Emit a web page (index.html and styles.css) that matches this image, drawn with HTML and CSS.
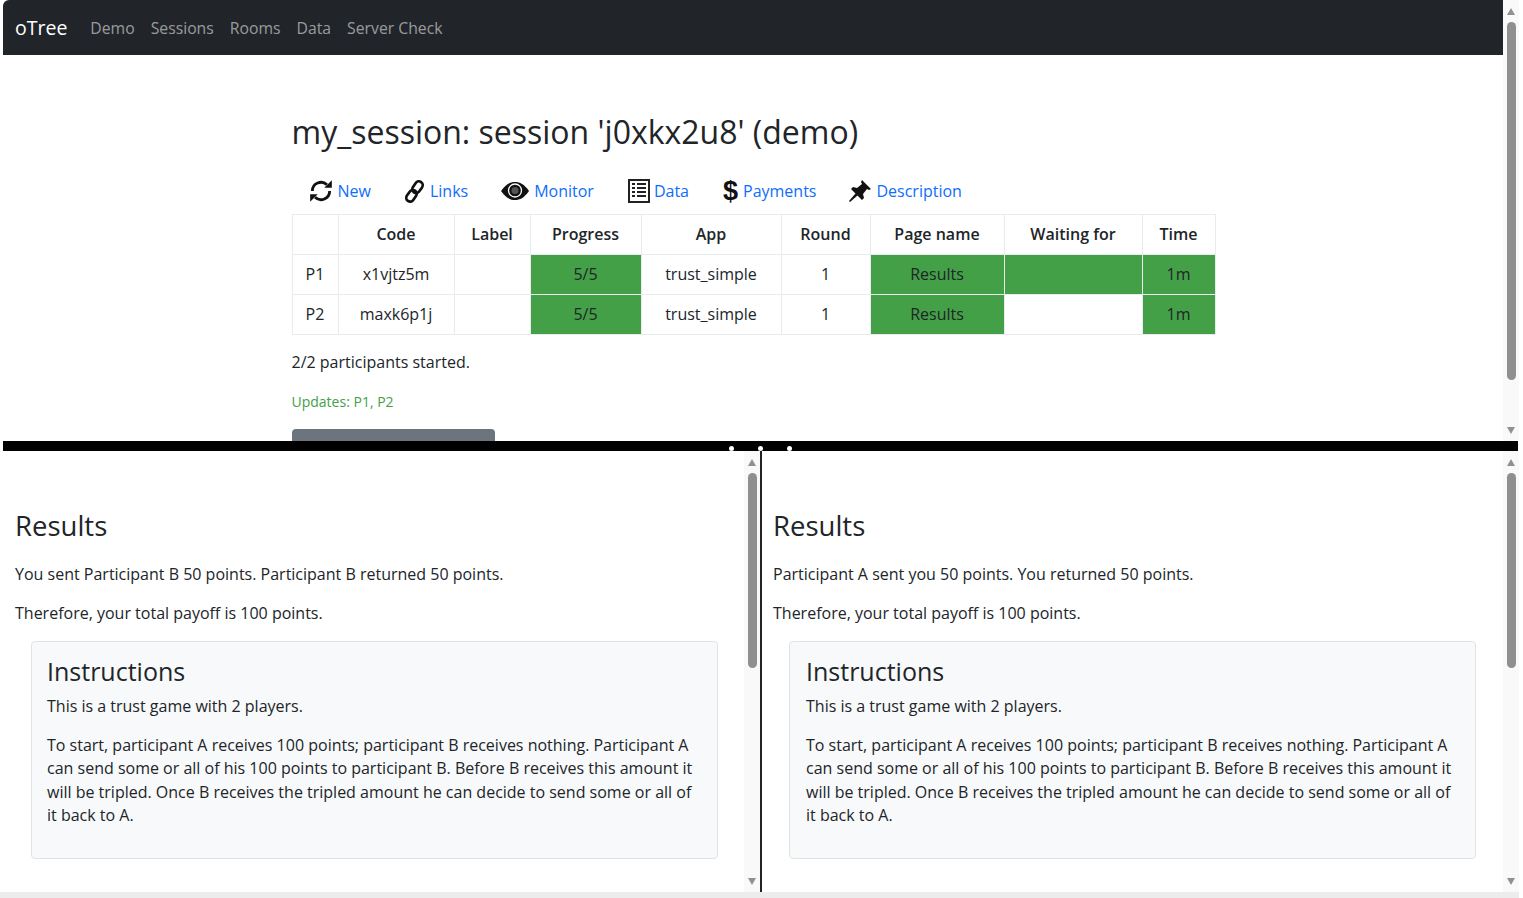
FILE: index.html
```html
<!DOCTYPE html>
<html lang="en">
  <head>
    <meta charset="UTF-8" />
    <title>oTree demo</title>
    <link rel="stylesheet" href="styles.css">
  </head>
  <body>
    <div class="top-pane">
      <div class="pane-body">
        <nav class="navbar">
          <span class="brand">oTree</span>
          <a class="nav-link">Demo</a>
          <a class="nav-link">Sessions</a>
          <a class="nav-link">Rooms</a>
          <a class="nav-link">Data</a>
          <a class="nav-link">Server Check</a>
        </nav>
        <div class="container">
          <h1 class="session-title">my_session: session 'j0xkx2u8' (demo)</h1>
          <ul class="tabs">
            <li class="tab tab-new">
              <svg class="icon" viewBox="0 0 24 24" width="26" height="26"><path d="M4 12a8 8 0 0 1 13.500-5.800" fill="none" stroke="#111" stroke-width="2.600"/><path d="M20 12a8 8 0 0 1-13.500 5.800" fill="none" stroke="#111" stroke-width="2.600"/><path d="M22 2v7h-7zM2 22v-7h7z" fill="#111"/></svg>
              <a>New</a>
            </li>
            <li class="tab">
              <svg class="icon" viewBox="0 0 24 24" width="23" height="25"><g fill="none" stroke="#111" stroke-width="2.800" transform="rotate(-55 12 12)"><rect x="0" y="8" width="13" height="8" rx="4"/><rect x="11" y="8" width="13" height="8" rx="4"/></g></svg>
              <a>Links</a>
            </li>
            <li class="tab tab-monitor">
              <svg class="icon" viewBox="0 0 30 20" width="30" height="20"><path d="M1 10C6 3 10 1 15 1s9 2 14 9c-5 7-9 9-14 9s-9-2-14-9z" fill="#111"/><circle cx="15" cy="9.500" r="6.500" fill="none" stroke="#fff" stroke-width="1.300"/><circle cx="15" cy="9.500" r="3.500" fill="#555"/></svg>
              <a>Monitor</a>
            </li>
            <li class="tab">
              <svg class="icon" viewBox="0 0 22 24" width="22" height="24"><rect x="1" y="1" width="20" height="22" fill="#fff" stroke="#222" stroke-width="2"/><path d="M4 5h3M9 5h9M4 9h3M9 9h9M4 13h3M9 13h9M4 17h3M9 17h9" stroke="#222" stroke-width="2"/></svg>
              <a>Data</a>
            </li>
            <li class="tab tab-payments">
              <span class="dollar">$</span>
              <a>Payments</a>
            </li>
            <li class="tab">
              <svg class="icon" viewBox="0 0 24 24" width="24" height="24"><path d="M14 1l9 9-2 1-2-1-4 5 1 4-2 2-4.500-4.500L2 23l-1-1 6.500-7.500L3 10l2-2 4 1 5-4-1-2z" fill="#111"/></svg>
              <a>Description</a>
            </li>
          </ul>
          <table class="monitor">
            <thead>
              <tr><th class="col-id"></th><th class="col-code">Code</th><th class="col-label">Label</th><th class="col-progress">Progress</th><th class="col-app">App</th><th class="col-round">Round</th><th class="col-page">Page name</th><th class="col-wait">Waiting for</th><th class="col-time">Time</th></tr>
            </thead>
            <tbody>
              <tr><td>P1</td><td>x1vjtz5m</td><td></td><td class="hl">5/5</td><td>trust_simple</td><td>1</td><td class="hl">Results</td><td class="hl"></td><td class="hl">1m</td></tr>
              <tr><td>P2</td><td>maxk6p1j</td><td></td><td class="hl">5/5</td><td>trust_simple</td><td>1</td><td class="hl">Results</td><td></td><td class="hl">1m</td></tr>
            </tbody>
          </table>
          <p class="started">2/2 participants started.</p>
          <p class="updates">Updates: P1, P2</p>
          <button class="advance">Advance slowest users</button>
        </div>
      </div>
      <div class="scrollbar">
        <span class="arrow-up"></span>
        <span class="thumb thumb-top"></span>
        <span class="arrow-down"></span>
      </div>
    </div>

    <div class="divider">
      <span class="dot"></span>
      <span class="dot"></span>
      <span class="dot"></span>
    </div>

    <div class="bottom">
      <div class="frame frame-left">
        <div class="pane-body player">
          <h2 class="page-title">Results</h2>
          <p>You sent Participant B 50 points. Participant B returned 50 points.</p>
          <p>Therefore, your total payoff is 100 points.</p>
          <div class="card">
            <h3>Instructions</h3>
            <p>This is a trust game with 2 players.</p>
            <p>To start, participant A receives 100 points; participant B receives nothing. Participant A can send some or all of his 100 points to participant B. Before B receives this amount it will be tripled. Once B receives the tripled amount he can decide to send some or all of it back to A.</p>
          </div>
        </div>
        <div class="scrollbar">
          <span class="arrow-up"></span>
          <span class="thumb thumb-bottom"></span>
          <span class="arrow-down"></span>
        </div>
      </div>
      <div class="frame frame-right">
        <div class="pane-body player">
          <h2 class="page-title">Results</h2>
          <p>Participant A sent you 50 points. You returned 50 points.</p>
          <p>Therefore, your total payoff is 100 points.</p>
          <div class="card">
            <h3>Instructions</h3>
            <p>This is a trust game with 2 players.</p>
            <p>To start, participant A receives 100 points; participant B receives nothing. Participant A can send some or all of his 100 points to participant B. Before B receives this amount it will be tripled. Once B receives the tripled amount he can decide to send some or all of it back to A.</p>
          </div>
        </div>
        <div class="scrollbar">
          <span class="arrow-up"></span>
          <span class="thumb thumb-bottom"></span>
          <span class="arrow-down"></span>
        </div>
      </div>
    </div>
    <div class="bottom-edge"></div>
  </body>
</html>
```

FILE: styles.css
```css
* {
  margin: 0;
  padding: 0;
  box-sizing: border-box;
}
html,
body {
  height: 100%;
  overflow: hidden;
}
body {
  display: flex;
  flex-direction: column;
  width: 1519px;
  padding-left: 3px;
  background: #fff;
  color: #212529;
  font-family: "Open Sans", "Noto Sans", sans-serif;
  font-size: 16px;
}
.top-pane {
  display: flex;
  height: 441px;
  overflow: hidden;
}
.pane-body {
  flex: 1;
  min-width: 0;
  overflow: hidden;
}
.navbar {
  display: flex;
  align-items: center;
  height: 55px;
  padding-left: 12px;
  background: #212529;
  border-top-left-radius: 6px;
}
.brand {
  margin-right: 15px;
  color: #fff;
  font-size: 19.500px;
}
.nav-link {
  padding: 0 8px;
  color: rgba(255, 255, 255, 0.55);
  font-size: 15.750px;
}
.container {
  width: 923px;
  margin: 0 auto;
}
.session-title {
  margin-top: 57px;
  font-size: 32px;
  font-weight: 400;
  line-height: 40px;
}
.tabs {
  display: flex;
  align-items: center;
  height: 40px;
  margin-top: 19px;
  padding-left: 16px;
  list-style: none;
}
.tab {
  display: flex;
  align-items: center;
  gap: 4px;
  margin-right: 33px;
}
.tab-new {
  margin-right: 32px;
}
.tab-monitor {
  margin-left: -1px;
  margin-right: 34px;
}
.tab-payments {
  margin-right: 32px;
}
.tab a {
  color: #0d6efd;
}
.dollar {
  width: 17px;
  color: #111;
  font-family: "Liberation Sans", sans-serif;
  font-size: 27px;
  font-weight: 700;
  text-align: center;
}
.monitor {
  width: 923px;
  margin-top: 3px;
  border-collapse: collapse;
  table-layout: fixed;
  border: 1px solid #e4e7ea;
}
.monitor th,
.monitor td {
  height: 40px;
  padding-bottom: 2px;
  border: 1px solid #e9ecef;
  text-align: center;
  font-weight: 400;
}
.monitor th {
  font-weight: 600;
}
.monitor .hl {
  background: #43a047;
}
.col-id { width: 46px; }
.col-code { width: 116px; }
.col-label { width: 76px; }
.col-progress { width: 111px; }
.col-app { width: 140px; }
.col-round { width: 89px; }
.col-page { width: 134px; }
.col-wait { width: 138px; }
.col-time { width: 73px; }
.started {
  margin-top: 15px;
  line-height: 24px;
}
.updates {
  margin-top: 18px;
  color: #43a047;
  font-size: 14px;
  line-height: 20px;
}
.advance {
  display: block;
  width: 203px;
  height: 38px;
  margin-top: 17px;
  border: 0;
  border-radius: 4px;
  background: #6c757d;
  color: #fff;
  font: inherit;
}
.scrollbar {
  display: flex;
  flex: none;
  flex-direction: column;
  align-items: center;
  width: 16px;
  padding: 8px 0 7px;
  background: #f9f9f9;
}
.arrow-up,
.arrow-down {
  width: 0;
  height: 0;
  border-left: 4.500px solid transparent;
  border-right: 4.500px solid transparent;
}
.arrow-up {
  border-bottom: 7px solid #909090;
}
.arrow-down {
  margin-top: auto;
  border-top: 7px solid #909090;
}
.thumb {
  width: 9px;
  border-radius: 5px;
  background: #8f8f8f;
}
.thumb-top {
  height: 358px;
  margin-top: 7px;
}
.thumb-bottom {
  height: 195px;
  margin-top: 7px;
}
.divider {
  display: flex;
  flex: none;
  justify-content: center;
  gap: 24px;
  height: 10px;
  margin-right: 1px;
  padding-top: 5px;
  padding-right: 1px;
  background: #000;
}
.dot {
  width: 5px;
  height: 5px;
  border-radius: 50%;
  background: #fff;
}
.bottom {
  display: flex;
  height: 441px;
}
.frame {
  display: flex;
  overflow: hidden;
}
.frame-left {
  width: 757px;
}
.frame-right {
  flex: 1;
  border-left: 2px solid #222;
}
.player {
  padding: 0 12px;
}
.frame-right .player {
  padding-left: 11px;
}
.player p {
  line-height: 23.500px;
}
.page-title {
  margin-top: 58px;
  margin-bottom: 20px;
  font-size: 27.500px;
  font-weight: 400;
  line-height: 34px;
}
.player > p {
  margin-bottom: 15.500px;
}
.card {
  margin: 0 15px 0 16px;
  padding: 13px 16px 30px;
  border: 1px solid #e1e3e5;
  border-radius: 4px;
  background: #f8f9fa;
}
.frame-left .card {
  margin-right: 14px;
  padding-left: 15px;
}
.card h3 {
  margin-bottom: 8px;
  font-size: 25px;
  font-weight: 400;
  line-height: 32px;
}
.card p + p {
  margin-top: 15px;
}
.bottom-edge {
  flex: none;
  height: 6px;
  margin-left: -3px;
  width: 1523px;
  background: #ececec;
}
```
